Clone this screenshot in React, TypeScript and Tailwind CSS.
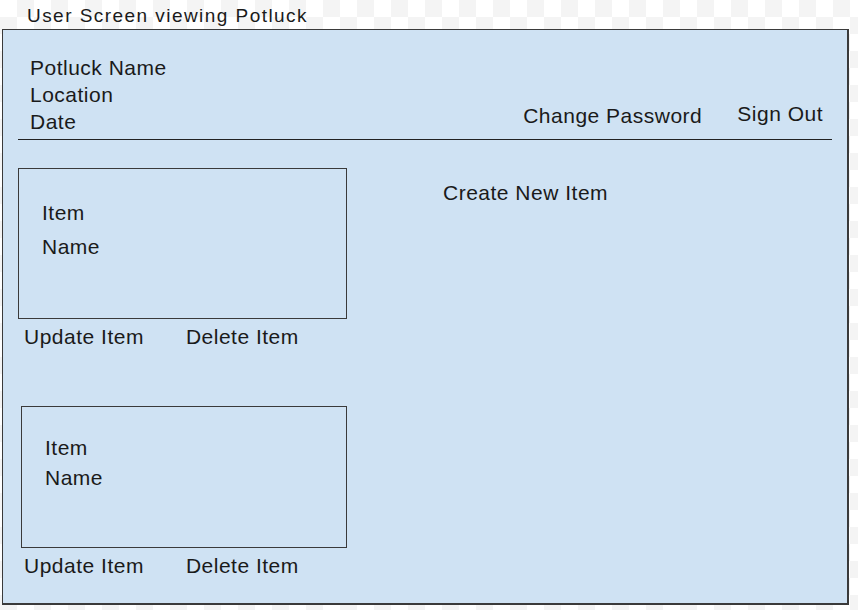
export default function App() {
  const font = { fontFamily: '"Liberation Sans", Arial, sans-serif' }

  return (
    <div
      className="w-[858px] h-[610px] overflow-hidden text-[#1a1a1a] bg-white bg-[repeating-conic-gradient(#f4f4f4_0_25%,#ffffff_0_50%)] bg-[length:34px_34px]"
      style={font}
    >
      <div className="h-[29px] pl-[27px] pt-[4px] text-[19px] leading-[24px] tracking-[1.45px]">
        User Screen viewing Potluck
      </div>

      <div className="ml-[2px] w-[847px] h-[576px] bg-[#cfe2f3] border border-r-2 border-b-2 border-[#3a3a3a] text-[21px] leading-[27px] tracking-[0.5px]">
        {/* header */}
        <div className="flex items-end justify-between pl-[27px] pr-[24px] pt-[24px]">
          <div>
            <div>Potluck Name</div>
            <div>Location</div>
            <div>Date</div>
          </div>
          <div className="flex items-end gap-[35px]">
            <span className="mb-[6px]">Change Password</span>
            <span className="mb-[8px]">Sign Out</span>
          </div>
        </div>
        <div className="ml-[15px] mr-[15px] mt-[4px] h-px bg-[#222]" />

        <div className="flex">
          <div className="flex flex-col">
            <ItemCard
              boxClass="ml-[15px] mt-[28px] w-[329px] h-[151px] pl-[23px] pt-[30px]"
              nameGap="mt-[7px]"
            />
            <div className="h-[56px]" />
            <ItemCard
              boxClass="ml-[18px] w-[326px] h-[142px] pl-[23px] pt-[27px]"
              nameGap="mt-[3px]"
            />
          </div>
          <div className="ml-[96px] mt-[39px]">Create New Item</div>
        </div>
      </div>
    </div>
  )
}

function ItemCard({ boxClass, nameGap }: any) {
  return (
    <div>
      <div className={'border border-[#3a3a3a] ' + boxClass}>
        <div>Item</div>
        <div className={nameGap}>Name</div>
      </div>
      <div className="flex gap-[42px] pl-[21px] pt-[4px]">
        <span>Update Item</span>
        <span>Delete Item</span>
      </div>
    </div>
  )
}
